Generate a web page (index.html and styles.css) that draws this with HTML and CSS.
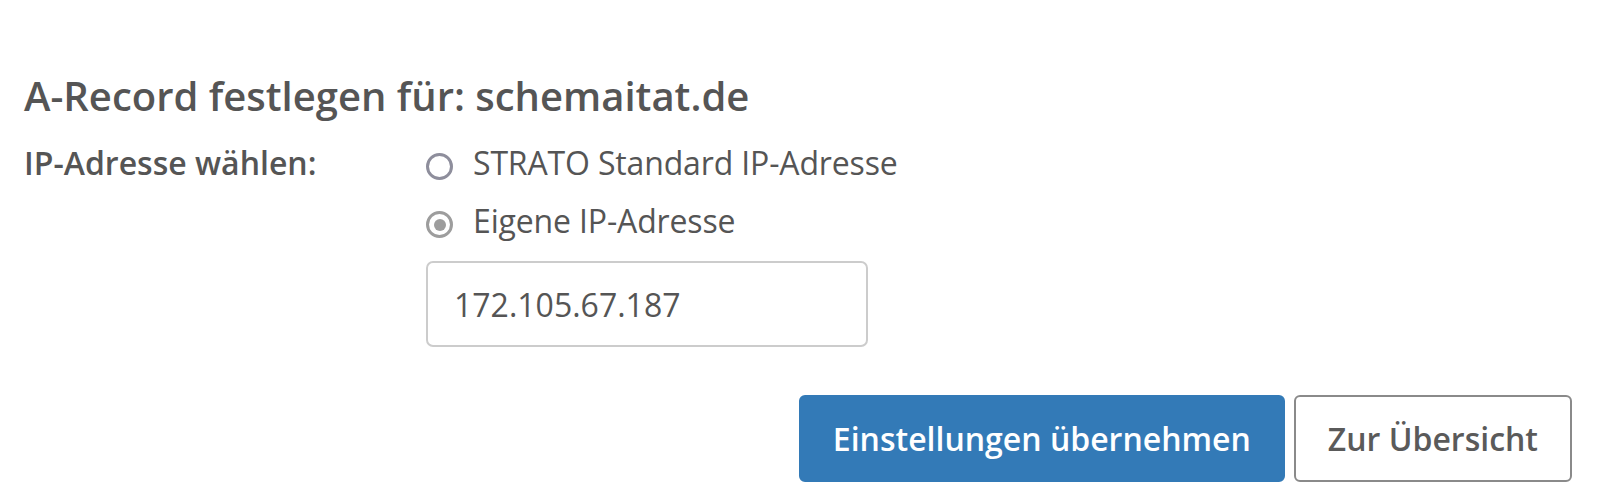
FILE: index.html
```html
<!DOCTYPE html>
<html lang="de">
<head>
<meta charset="utf-8">
<title>A-Record festlegen</title>
<link rel="stylesheet" href="styles.css">
</head>
<body>
<div class="page">
  <h2 class="title">A-Record festlegen für: schemaitat.de</h2>
  <div class="form-row">
    <div class="label">IP-Adresse wählen:</div>
    <div class="options">
      <div class="radio-row">
        <span class="radio"></span>
        <span class="radio-text">STRATO Standard IP-Adresse</span>
      </div>
      <div class="radio-row">
        <span class="radio checked"></span>
        <span class="radio-text">Eigene IP-Adresse</span>
      </div>
      <div class="input">172.105.67.187</div>
    </div>
  </div>
  <div class="actions">
    <button class="btn btn-primary">Einstellungen übernehmen</button>
    <button class="btn btn-default">Zur Übersicht</button>
  </div>
</div>
</body>
</html>
```

FILE: styles.css
```css
html, body {
  margin: 0;
  padding: 0;
  background: #ffffff;
}
body {
  font-family: "Open Sans", "Noto Sans", sans-serif;
  color: #555555;
}
.page {
  padding: 0 42px 0 24px;
}
.title {
  margin: 68px 0 0 0;
  font-size: 40px;
  line-height: 56px;
  font-weight: 600;
  color: #555555;
}
.form-row {
  display: flex;
  margin-top: 17px;
}
.label {
  width: 402px;
  font-size: 32px;
  line-height: 44px;
  font-weight: 600;
  color: #555555;
}
.options {
  display: flex;
  flex-direction: column;
  gap: 14px;
}
.radio-row {
  display: flex;
  align-items: center;
  font-size: 32px;
  line-height: 44px;
  color: #555555;
}
.radio-text {
  letter-spacing: -0.15px;
}
.radio {
  box-sizing: border-box;
  width: 27px;
  height: 27px;
  border: 3px solid #8e8e9c;
  border-radius: 50%;
  margin-top: 7px;
  margin-right: 20px;
  display: flex;
  align-items: center;
  justify-content: center;
}
.radio.checked {
  border-color: #9d9d9d;
}
.radio.checked::after {
  content: "";
  width: 12px;
  height: 12px;
  border-radius: 50%;
  background: #9d9d9d;
}
.input {
  box-sizing: border-box;
  margin-top: 4px;
  width: 442px;
  height: 86px;
  border: 2px solid #cccccc;
  border-radius: 7px;
  padding: 0 26px;
  display: flex;
  align-items: center;
  font-size: 32px;
  color: #555555;
}
.actions {
  display: flex;
  justify-content: flex-end;
  gap: 9px;
  margin-top: 48px;
}
.btn {
  box-sizing: border-box;
  height: 87px;
  border-radius: 6px;
  font-family: "Open Sans", "Noto Sans", sans-serif;
  font-size: 32px;
  font-weight: 600;
  cursor: pointer;
}
.btn-primary {
  background: #337ab7;
  border: 2px solid #337ab7;
  color: #ffffff;
  padding: 0 32px;
}
.btn-default {
  background: #ffffff;
  border: 2px solid #8a8a8a;
  color: #5a5a5a;
  padding: 0 32px;
}
```
